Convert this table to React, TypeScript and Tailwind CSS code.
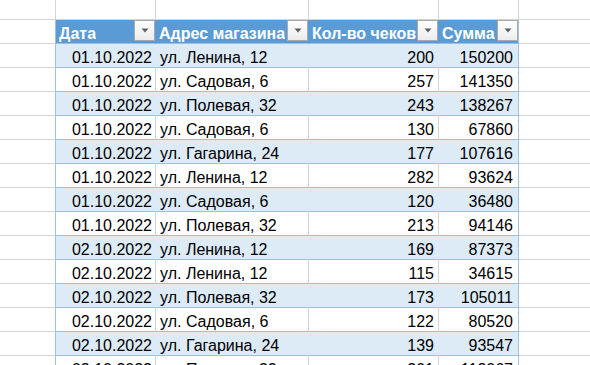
const rows: [string, string, number, number][] = [
  ["01.10.2022", "ул. Ленина, 12", 200, 150200],
  ["01.10.2022", "ул. Садовая, 6", 257, 141350],
  ["01.10.2022", "ул. Полевая, 32", 243, 138267],
  ["01.10.2022", "ул. Садовая, 6", 130, 67860],
  ["01.10.2022", "ул. Гагарина, 24", 177, 107616],
  ["01.10.2022", "ул. Ленина, 12", 282, 93624],
  ["01.10.2022", "ул. Садовая, 6", 120, 36480],
  ["01.10.2022", "ул. Полевая, 32", 213, 94146],
  ["02.10.2022", "ул. Ленина, 12", 169, 87373],
  ["02.10.2022", "ул. Ленина, 12", 115, 34615],
  ["02.10.2022", "ул. Полевая, 32", 173, 105011],
  ["02.10.2022", "ул. Садовая, 6", 122, 80520],
  ["02.10.2022", "ул. Гагарина, 24", 139, 93547],
  ["02.10.2022", "ул. Полевая, 32", 201, 113067],
];

function FilterBtn() {
  return (
    <div className="flex h-[21px] w-[21px] shrink-0 items-center justify-center border border-[#a9a9a9] bg-gradient-to-b from-white to-[#ececec]">
      <svg width="8" height="5" viewBox="0 0 8 5">
        <path d="M0.5 0.5 L7.5 0.5 L4 4.5 Z" fill="#5f5f5f" />
      </svg>
    </div>
  );
}

function HeadCell({ label, w, last }: { label: string; w: string; last?: boolean }) {
  return (
    <div
      className={`${w} flex h-full justify-between border-b border-r bg-[#5b9bd5] ${
        last ? "border-r-[#9bc2e6]" : "border-r-[#5b9bd5]"
      } border-b-[#9bc2e6]`}
    >
      <span className="truncate pl-[3px] pt-[4px] text-[16px] font-bold leading-[19px] text-white">{label}</span>
      <FilterBtn />
    </div>
  );
}

export default function App() {
  return (
    <div className="h-[365px] w-[590px] overflow-hidden bg-white font-['Liberation_Sans',Arial,sans-serif] text-[16px] text-black">
      {/* row above the table */}
      <div className="-mt-[4px] flex h-[24px]">
        <div className="w-[56px] border-b border-r border-[#d4d4d4]" />
        <div className="w-[100px] border-b border-r border-[#d4d4d4]" />
        <div className="w-[153px] border-b border-r border-[#d4d4d4]" />
        <div className="w-[130px] border-b border-r border-[#d4d4d4]" />
        <div className="w-[80px] border-b border-r border-[#d4d4d4]" />
        <div className="flex-1 border-b border-[#d4d4d4]" />
      </div>

      {/* header */}
      <div className="flex h-[24px]">
        <div className="w-[56px] border-b border-r border-b-[#d4d4d4] border-r-[#9bc2e6]" />
        <HeadCell label="Дата" w="w-[100px]" />
        <HeadCell label="Адрес магазина" w="w-[153px]" />
        <HeadCell label="Кол-во чеков" w="w-[130px]" />
        <HeadCell label="Сумма" w="w-[80px]" last />
        <div className="flex-1 border-b border-[#d4d4d4]" />
      </div>

      {rows.map(([date, addr, cnt, sum], i) => {
        const band = i % 2 === 0;
        const inner = band ? "bg-[#ddebf7] border-r-[#ddebf7]" : "bg-white border-r-[#d4d4d4]";
        return (
          <div key={i} className="flex h-[24px] leading-[19px]">
            <div className="w-[56px] border-b border-r border-b-[#d4d4d4] border-r-[#9bc2e6]" />
            <div className={`w-[100px] border-b border-r border-b-[#9bc2e6] pr-[3px] pt-[4px] text-right ${inner}`}>
              {date}
            </div>
            <div className={`w-[153px] whitespace-nowrap border-b border-r border-b-[#9bc2e6] pl-[4px] pt-[4px] ${inner}`}>
              {addr}
            </div>
            <div className={`w-[130px] border-b border-r border-b-[#9bc2e6] pr-[4px] pt-[4px] text-right ${inner}`}>
              {cnt}
            </div>
            <div
              className={`w-[80px] border-b border-r border-b-[#9bc2e6] border-r-[#9bc2e6] pr-[5px] pt-[4px] text-right ${
                band ? "bg-[#ddebf7]" : "bg-white"
              }`}
            >
              {sum}
            </div>
            <div className="flex-1 border-b border-[#d4d4d4]" />
          </div>
        );
      })}
    </div>
  );
}
